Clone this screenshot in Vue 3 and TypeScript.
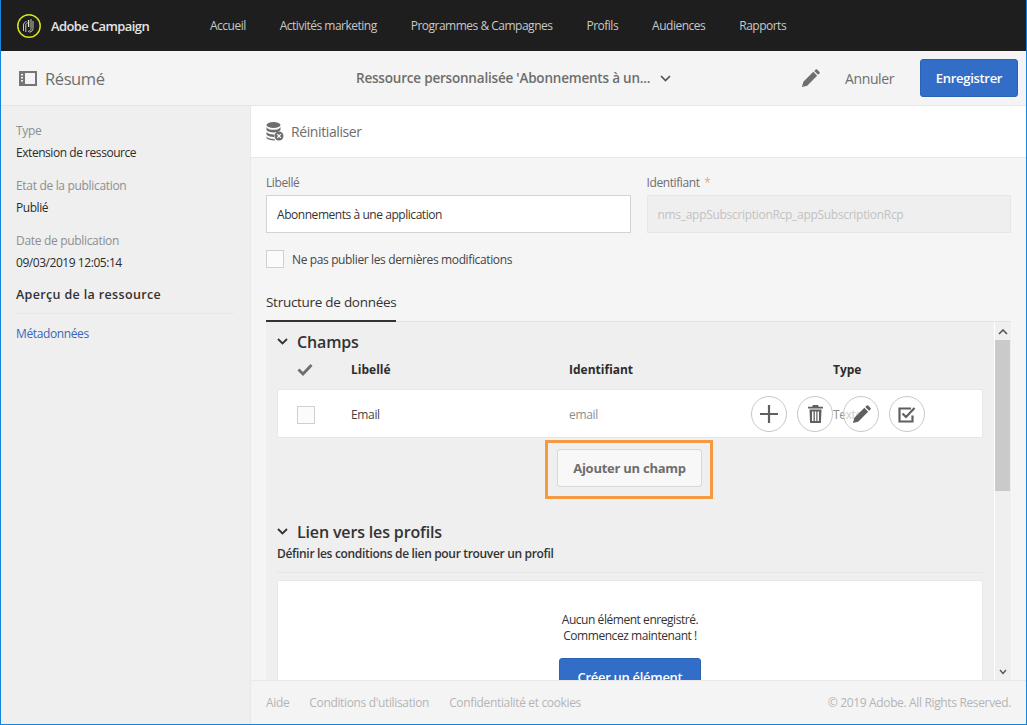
<script setup lang="ts">
const nav: string[] = ['Accueil', 'Activités marketing', 'Programmes & Campagnes', 'Profils', 'Audiences', 'Rapports']
const meta = [
  { label: 'Type', value: 'Extension de ressource' },
  { label: 'Etat de la publication', value: 'Publié' },
  { label: 'Date de publication', value: '09/03/2019 12:05:14' },
]
</script>

<template>
  <div class="window">
    <header class="topbar">
      <div class="brand">
        <svg class="logo" width="26" height="26" viewBox="0 0 26 26" fill="none">
          <circle cx="13" cy="13" r="11.200" stroke="#d6e21f" stroke-width="1.500" />
          <path d="M7.500 18v-6c0-1.500 1.200-3 3-3.500M9.800 19v-7c0-1 .8-1.800 2-2.200M15 6v9.500c0 1.500-1.200 2.500-3 3M17 8v7.500c0 2-1.500 3.300-3.500 3.700" stroke="#c9c9b4" stroke-width="1" />
          <path d="M12.600 7v7" stroke="#e6e6d0" stroke-width="1.300" />
        </svg>
        <span>Adobe Campaign</span>
      </div>
      <nav class="nav"><a v-for="item in nav" :key="item">{{ item }}</a></nav>
    </header>

    <div class="subbar">
      <div class="summary">
        <svg width="18" height="15" viewBox="0 0 18 15"><path fill="#757575" fill-rule="evenodd" d="M0 0h18v15H0zM6 2v11h10V2zM2 3v1.500h2V3zM2 6v1.500h2V6zM2 9v1.500h2V9z" /></svg>
        <span>Résumé</span>
      </div>
      <div class="title">
        <span>Ressource personnalisée 'Abonnements à un...</span>
        <svg width="11" height="7" viewBox="0 0 11 7" fill="none"><path d="M1 1l4.500 4.500L10 1" stroke="#555" stroke-width="1.700" /></svg>
      </div>
      <div class="actions">
        <svg class="pen" width="19" height="19" viewBox="0 0 20 20"><path fill="#6e6e6e" d="M1 19l1.500-5.500L13 3l4 4L6.500 17.500zM14 2l1.500-1.500a1 1 0 0 1 1.400 0l2.600 2.600a1 1 0 0 1 0 1.400L18 6z" /></svg>
        <span class="cancel">Annuler</span>
        <button class="primary save">Enregistrer</button>
      </div>
    </div>

    <div class="body">
      <aside class="side">
        <div v-for="m in meta" :key="m.label" class="meta">
          <div class="meta-label">{{ m.label }}</div>
          <div class="meta-value">{{ m.value }}</div>
        </div>
        <div class="side-head">Aperçu de la ressource</div>
        <a class="side-link">Métadonnées</a>
      </aside>

      <main class="main">
        <div class="toolbar">
          <svg width="18" height="19" viewBox="0 0 18 19">
            <ellipse cx="7.500" cy="3" rx="7" ry="3" fill="#6e6e6e" />
            <path fill="#6e6e6e" d="M.5 5c1 2 3.500 2.800 7 2.800s6-.8 7-2.800v3c-1 1.500-3.500 2.400-7 2.400S1.500 9.500.5 8zM.5 10c1 1.700 3.500 2.400 7 2.400h1a6 6 0 0 0-.5 2.500h-.5c-3.500 0-6-.9-7-2.400zM.5 14.500c1 1.600 3.500 2.300 7.700 2.400l1 1.600c-5 0-7.700-1-8.700-2.500z" />
            <circle cx="13" cy="14" r="4.500" fill="#6e6e6e" />
            <path d="M11.200 12.200l3.600 3.600M14.800 12.200l-3.600 3.600" stroke="#fff" stroke-width="1.200" />
          </svg>
          <span>Réinitialiser</span>
        </div>

        <div class="content">
          <div class="form-row">
            <label class="field left">
              <span class="field-label">Libellé</span>
              <span class="input">Abonnements à une application</span>
            </label>
            <label class="field right">
              <span class="field-label">Identifiant <i>*</i></span>
              <span class="input disabled">nms_appSubscriptionRcp_appSubscriptionRcp</span>
            </label>
          </div>
          <div class="check-row"><span class="box"></span><span>Ne pas publier les dernières modifications</span></div>
          <div class="tabs"><span class="tab">Structure de données</span></div>

          <div class="panel">
            <div class="panel-inner">
              <div class="section-title">
                <svg width="11" height="8" viewBox="0 0 11 8" fill="none"><path d="M1 1l4.500 4.500L10 1" stroke="#333" stroke-width="1.800" /></svg>
                <span>Champs</span>
              </div>
              <div class="thead">
                <svg class="col-check" width="16" height="13" viewBox="0 0 16 13" fill="none"><path d="M1.500 6.500l4.500 4.500 8.500-9" stroke="#6e6e6e" stroke-width="2.800" /></svg>
                <span class="col-a">Libellé</span><span class="col-b">Identifiant</span><span class="col-c">Type</span>
              </div>
              <div class="row">
                <span class="col-check"><span class="box small"></span></span>
                <span class="col-a email">Email</span><span class="col-b muted">email</span><span class="col-c muted">Texte</span>
                <div class="row-actions">
                  <span class="circle">
                    <svg width="18" height="18" viewBox="0 0 18 18"><path fill="#5f5f5f" d="M7.900 0h2.200v7.900H18v2.200h-7.900V18H7.900v-7.900H0V7.900h7.900z" /></svg>
                  </span>
                  <span class="circle">
                    <svg width="15" height="18" viewBox="0 0 15 18"><path fill="#5f5f5f" fill-rule="evenodd" d="M5 0h5l.8 1.800H15v1.700H0V1.800h4.200zM1.500 4.500h12l-.6 13.500H2.100zM4 6.500v9.500h1.500V6.500zM6.800 6.500v9.500h1.500V6.500zM9.500 6.500v9.500H11V6.500z" /></svg>
                  </span>
                  <span class="circle">
                    <svg width="19" height="19" viewBox="0 0 20 20"><path fill="#5f5f5f" d="M1 19l1.500-5.500L13 3l4 4L6.500 17.500zM14 2l1.500-1.500a1 1 0 0 1 1.400 0l2.600 2.600a1 1 0 0 1 0 1.400L18 6z" /></svg>
                  </span>
                  <span class="circle">
                    <svg width="18" height="17" viewBox="0 0 18 17" fill="none"><path d="M14.500 9.500V15.500H1.500V2.500H13" stroke="#5f5f5f" stroke-width="2.200" /><path d="M4.500 7.500l3.500 3.500L16.500 2" stroke="#5f5f5f" stroke-width="2.200" /></svg>
                  </span>
                </div>
              </div>
              <div class="add-wrap">
                <div class="highlight"><button class="add">Ajouter un champ</button></div>
              </div>
              <div class="section-title second">
                <svg width="11" height="8" viewBox="0 0 11 8" fill="none"><path d="M1 1l4.500 4.500L10 1" stroke="#333" stroke-width="1.800" /></svg>
                <span>Lien vers les profils</span>
              </div>
              <div class="section-sub">Définir les conditions de lien pour trouver un profil</div>
              <div class="empty">
                <p>Aucun élément enregistré.<br />Commencez maintenant !</p>
                <button class="primary create">Créer un élément</button>
              </div>
            </div>
            <div class="scrollbar">
              <svg width="10" height="6" viewBox="0 0 10 6" fill="none"><path d="M1 5l4-4 4 4" stroke="#555" stroke-width="1.600" /></svg>
              <div class="track"><div class="thumb"></div></div>
              <svg width="8" height="6" viewBox="0 0 8 6" fill="none"><path d="M1 1l3 3.500L7 1" stroke="#555" stroke-width="1.400" /></svg>
            </div>
          </div>
        </div>

        <footer class="footer">
          <div class="links"><span>Aide</span><span>Conditions d'utilisation</span><span>Confidentialité et cookies</span></div>
          <span>© 2019 Adobe. All Rights Reserved.</span>
        </footer>
      </main>
    </div>
  </div>
</template>

<style>
html, body { margin: 0; padding: 0; background: #f4f4f4; overflow: hidden; }
</style>

<style scoped>
* { box-sizing: border-box; }
.window { width: 1027px; height: 725px; display: flex; flex-direction: column; overflow: hidden; border-left: 1px solid #1583e0; border-right: 1px solid #1583e0; border-bottom: 1px solid #1583e0; font-family: "Open Sans", Lato, sans-serif; font-size: 12px; color: #333; background: #f4f4f4; }
.topbar { height: 51px; flex: none; background: #1e1e1e; display: flex; align-items: center; color: #c8c8c8; }
.brand { display: flex; align-items: center; gap: 9px; margin-left: 15px; width: 193px; color: #e4e4e4; font-size: 13px; font-weight: 600; letter-spacing: -0.6px; }
.logo { flex: none; }
.nav { display: flex; gap: 34px; margin-left: 1px; letter-spacing: -0.5px; }
.subbar { height: 55px; flex: none; display: flex; align-items: center; position: relative; background: #f4f4f4; border-bottom: 1px solid #e6e6e6; }
.summary { display: flex; align-items: center; gap: 8px; margin-left: 18px; width: 337px; color: #6e6e6e; font-size: 16.500px; letter-spacing: -0.4px; }
.title { display: flex; align-items: center; gap: 10px; width: 400px; color: #6e6e6e; font-weight: 600; font-size: 13.500px; letter-spacing: -0.2px; }
.actions { display: flex; align-items: center; margin-left: auto; margin-right: 8px; }
.pen { margin-right: 25px; }
.cancel { margin-right: 26px; color: #6e6e6e; font-size: 14px; letter-spacing: -0.4px; }
.primary { background: #326ec8; border: 1px solid #2a62b4; border-radius: 3px; color: #fff; font-family: inherit; font-weight: 600; padding: 0; }
.save { width: 98px; height: 38px; font-size: 13px; letter-spacing: -0.3px; }
.body { flex: 1; min-height: 0; display: flex; }
.side { width: 250px; flex: none; background: #efefef; padding: 17px 15px 0; border-right: 1px solid #e8e8e8; }
.meta { height: 55px; }
.meta-label { color: #8e8e8e; line-height: 16px; letter-spacing: -0.32px; }
.meta-value { margin-top: 6px; color: #2c2c2c; line-height: 16px; letter-spacing: -0.45px; }
.side-head { margin-top: -2px; padding-bottom: 9px; border-bottom: 1px solid #e6e6e6; width: 218px; color: #323232; font-size: 12.500px; font-weight: 600; line-height: 18px; letter-spacing: 0.35px; }
.side-link { display: block; margin-top: 12px; color: #3a66bb; letter-spacing: -0.38px; line-height: 16px; }
.main { flex: 1; min-width: 0; display: flex; flex-direction: column; background: #f5f5f5; }
.toolbar { height: 52px; flex: none; display: flex; align-items: center; gap: 7px; padding-left: 15px; background: #fff; border-bottom: 1px solid #e8e8e8; color: #6e6e6e; font-size: 14px; letter-spacing: -0.4px; }
.content { flex: 1; min-height: 0; display: flex; flex-direction: column; padding: 17px 15px 0 15px; }
.form-row { display: flex; gap: 16px; }
.field { display: flex; flex-direction: column; gap: 4px; }
.left { width: 365px; }
.right { width: 365px; }
.field-label { color: #6e6e6e; line-height: 16px; letter-spacing: -0.4px; }
.field-label i { color: #f5a55c; font-style: normal; margin-left: 2px; }
.input { height: 38px; display: flex; align-items: center; padding-left: 10px; background: #fff; border: 1px solid #d4d4d4; color: #333; letter-spacing: -0.45px; }
.input.disabled { background: #efefef; border-color: #e6e6e6; color: #c2c2c2; letter-spacing: -0.3px; }
.check-row { display: flex; align-items: center; gap: 8px; margin-top: 17px; height: 18px; color: #444; letter-spacing: -0.37px; }
.box { display: block; width: 18px; height: 18px; background: #fbfbfb; border: 1px solid #cfcfcf; }
.tabs { margin-top: 24px; height: 30px; flex: none; border-bottom: 1px solid #e4e4e4; }
.tab { display: inline-block; height: 30px; border-bottom: 2px solid #333; color: #333; font-size: 13.500px; letter-spacing: -0.28px; line-height: 20px; }
.panel { flex: 1; min-height: 0; display: flex; background: #efefef; overflow: hidden; }
.panel-inner { width: 728px; flex: none; padding-left: 11px; padding-right: 11px; overflow: hidden; }
.section-title { display: flex; align-items: center; gap: 9px; margin-top: 8px; height: 24px; color: #333; font-size: 16px; font-weight: 600; letter-spacing: -0.15px; }
.section-title.second { margin-top: 0; }
.thead, .row { display: flex; align-items: center; position: relative; }
.thead { height: 35px; padding-bottom: 5px; color: #2c2c2c; font-weight: 700; letter-spacing: 0; }
.col-check { position: absolute; left: 20px; display: block; }
.col-a { position: absolute; left: 74px; }
.col-b { position: absolute; left: 292px; }
.col-c { position: absolute; left: 556px; }
.row { height: 49px; padding-top: 2px; background: #fff; border: 1px solid #e8e8e8; border-radius: 2px; letter-spacing: -0.35px; }
.row .col-check { left: 19px; }
.row .col-a { left: 73px; }
.row .col-b { left: 291px; }
.row .col-c { left: 555px; }
.box.small { width: 18px; height: 18px; }
.email { color: #444; }
.muted { color: #8e8e8e; }
.row-actions { position: absolute; left: 473px; top: 6px; display: flex; gap: 10px; }
.circle { width: 36px; height: 36px; flex: none; display: flex; align-items: center; justify-content: center; border: 1px solid #c8c8c8; border-radius: 50%; background: rgba(255, 255, 255, 0.55); }
.add-wrap { height: 82px; padding-top: 2px; display: flex; justify-content: center; padding-right: 2px; }
.highlight { width: 168px; height: 59px; padding: 6px 9px 0 9px; border: 3px solid #f59a42; }
.add { width: 145px; height: 38px; padding: 0; background: #f8f8f8; border: 1px solid #d8d8d8; border-radius: 3px; color: #6e6e6e; font-family: inherit; font-size: 13px; font-weight: 700; letter-spacing: -0.25px; }
.section-sub { height: 29px; padding-top: 2px; border-bottom: 1px solid #e6e6e6; color: #333; font-size: 12px; font-weight: 600; letter-spacing: -0.33px; line-height: 16px; }
.empty { margin-top: 7px; height: 200px; padding-top: 31px; background: #fff; border: 1px solid #e8e8e8; border-radius: 2px; text-align: center; }
.empty p { margin: 0; color: #333; line-height: 16px; letter-spacing: -0.45px; }
.create { margin-top: 14px; width: 142px; height: 38px; font-size: 13px; letter-spacing: -0.3px; }
.scrollbar { width: 17px; flex: none; display: flex; flex-direction: column; align-items: center; border-left: 1px solid #fff; padding-top: 7px; }
.track { flex: 1; width: 100%; margin-top: 5px; }
.thumb { width: 15px; height: 151px; background: #cacaca; }
.scrollbar svg:last-child { margin-bottom: 5px; }
.footer { height: 44px; flex: none; display: flex; justify-content: space-between; align-items: center; padding: 0 15px 0 15px; background: #f4f4f4; border-top: 1px solid #e8e8e8; color: #b4b4b4; letter-spacing: -0.35px; }
.links { display: flex; gap: 20px; }
</style>
